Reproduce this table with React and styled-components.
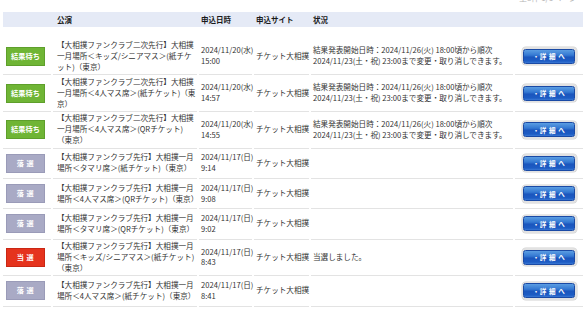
import React from "react";
import styled, { createGlobalStyle } from "styled-components";

const Global = createGlobalStyle`
  html, body { margin: 0; padding: 0; background: #fff; }
  body { font-family: "Noto Sans CJK JP", "Liberation Sans", sans-serif; color: #333; }
`;

const COLS = "48px 144px 53px 55px 202px 68px";

const Page = styled.div`
  width: 580px;
  padding-left: 3px;
  overflow: hidden;
`;

const TopBar = styled.div`
  height: 12px;
  display: flex;
  justify-content: flex-end;
  align-items: flex-start;
  overflow: hidden;
`;

const TopNote = styled.span`
  font-size: 8px;
  line-height: 8px;
  color: #b5b5b5;
  margin-top: -6px;
  margin-right: 6px;
`;

const HeaderRow = styled.div`
  display: grid;
  grid-template-columns: ${COLS};
  column-gap: 2px;
  height: 15px;
  align-items: center;
  background: #e5eaf6;
  margin-bottom: 11.5px;
`;

const HeadCell = styled.div`
  font-size: 7.5px;
  font-weight: 700;
  color: #1a1a1a;
  padding-left: ${(p) => p.$pad || 2}px;
`;

const Row = styled.div`
  display: grid;
  grid-template-columns: ${COLS};
  column-gap: 2px;
`;

const Cell = styled.div`
  display: flex;
  align-items: center;
  justify-content: ${(p) => (p.$center ? "center" : "flex-start")};
  min-height: 26.3px;
  padding: 1.5px 0 1.5px ${(p) => p.$pad ?? 2}px;
  border-bottom: 1px solid #e3e3e3;
  font-size: 7.6px;
  line-height: 10.9px;
  color: #333;
  white-space: nowrap;
`;

const Lines = styled.div`
  display: flex;
  flex-direction: column;
`;

const BADGE = {
  wait: { bg: "#6fb535", border: "#5e9f2b", label: "結果待ち", spacing: "0" },
  lose: { bg: "#a9aac5", border: "#9a9bb8", label: "落 選", spacing: "0.5px" },
  win: { bg: "#e5331d", border: "#c92714", label: "当 選", spacing: "0.5px" },
};

const Badge = styled.div`
  width: 39px;
  height: 19px;
  box-sizing: border-box;
  display: flex;
  align-items: center;
  justify-content: center;
  background: ${(p) => p.$bg};
  border: 1px solid ${(p) => p.$border};
  color: #fff;
  font-size: 7.2px;
  font-weight: 700;
  letter-spacing: ${(p) => p.$spacing};
  white-space: pre;
`;

const DetailRing = styled.div`
  padding: 1.5px;
  border-radius: 4px;
  background: #e2e2e2;
  box-shadow: 0 0 0 0.5px #d2d2d2;
  display: flex;
`;

const DetailButton = styled.button`
  width: 52px;
  height: 15px;
  border: 1px solid #1a4aa5;
  border-radius: 2.5px;
  background: linear-gradient(#5b9de2 0%, #3478d2 40%, #1b56bd 55%, #1d5cc4 85%, #3a78d4 100%);
  color: #fff;
  font-family: "Noto Sans CJK JP", sans-serif;
  font-size: 6.5px;
  font-weight: 700;
  letter-spacing: 0.6px;
  padding: 0;
  display: flex;
  align-items: center;
  justify-content: center;
  white-space: pre;
`;

const NOTE = [
  "結果発表開始日時：2024/11/26(火) 18:00頃から順次",
  "2024/11/23(土・祝) 23:00まで変更・取り消しできます。",
];

const rows = [
  {
    status: "wait",
    event: ["【大相撲ファンクラブ二次先行】大相撲", "一月場所＜キッズ/シニアマス＞(紙チケ", "ット)（東京）"],
    date: ["2024/11/20(水)", "15:00"],
    note: NOTE,
  },
  {
    status: "wait",
    event: ["【大相撲ファンクラブ二次先行】大相撲", "一月場所＜4人マス席＞(紙チケット)（東", "京）"],
    date: ["2024/11/20(水)", "14:57"],
    note: NOTE,
  },
  {
    status: "wait",
    event: ["【大相撲ファンクラブ二次先行】大相撲", "一月場所＜4人マス席＞(QRチケット)", "（東京）"],
    date: ["2024/11/20(水)", "14:55"],
    note: NOTE,
  },
  {
    status: "lose",
    event: ["【大相撲ファンクラブ先行】大相撲一月", "場所＜タマリ席＞(紙チケット)（東京）"],
    date: ["2024/11/17(日)", "9:14"],
    note: [],
  },
  {
    status: "lose",
    event: ["【大相撲ファンクラブ先行】大相撲一月", "場所＜4人マス席＞(QRチケット)（東京）"],
    date: ["2024/11/17(日)", "9:08"],
    note: [],
  },
  {
    status: "lose",
    event: ["【大相撲ファンクラブ先行】大相撲一月", "場所＜タマリ席＞(QRチケット)（東京）"],
    date: ["2024/11/17(日)", "9:02"],
    note: [],
  },
  {
    status: "win",
    event: ["【大相撲ファンクラブ先行】大相撲一月", "場所＜キッズ/シニアマス＞(紙チケット)", "（東京）"],
    date: ["2024/11/17(日)", "8:43"],
    note: ["当選しました。"],
  },
  {
    status: "lose",
    event: ["【大相撲ファンクラブ先行】大相撲一月", "場所＜4人マス席＞(紙チケット)（東京）"],
    date: ["2024/11/17(日)", "8:41"],
    note: [],
  },
];

const TextLines = ({ lines }) => (
  <Lines>
    {lines.map((l, i) => (
      <span key={i}>{l}</span>
    ))}
  </Lines>
);

export default function App() {
  return (
    <Page>
      <Global />
      <TopBar>
        <TopNote>全8件 1/1ページ</TopNote>
      </TopBar>
      <HeaderRow>
        <HeadCell />
        <HeadCell $pad={4}>公演</HeadCell>
        <HeadCell>申込日時</HeadCell>
        <HeadCell>申込サイト</HeadCell>
        <HeadCell>状況</HeadCell>
        <HeadCell />
      </HeaderRow>
      {rows.map((r, i) => {
        const b = BADGE[r.status];
        return (
          <Row key={i}>
            <Cell $pad={3}>
              <Badge $bg={b.bg} $border={b.border} $spacing={b.spacing}>
                {b.label}
              </Badge>
            </Cell>
            <Cell $pad={4}>
              <TextLines lines={r.event} />
            </Cell>
            <Cell>
              <TextLines lines={r.date} />
            </Cell>
            <Cell>チケット大相撲</Cell>
            <Cell>
              <TextLines lines={r.note} />
            </Cell>
            <Cell $center $pad={0}>
              <DetailRing>
                <DetailButton>{"・詳 細 へ"}</DetailButton>
              </DetailRing>
            </Cell>
          </Row>
        );
      })}
    </Page>
  );
}
